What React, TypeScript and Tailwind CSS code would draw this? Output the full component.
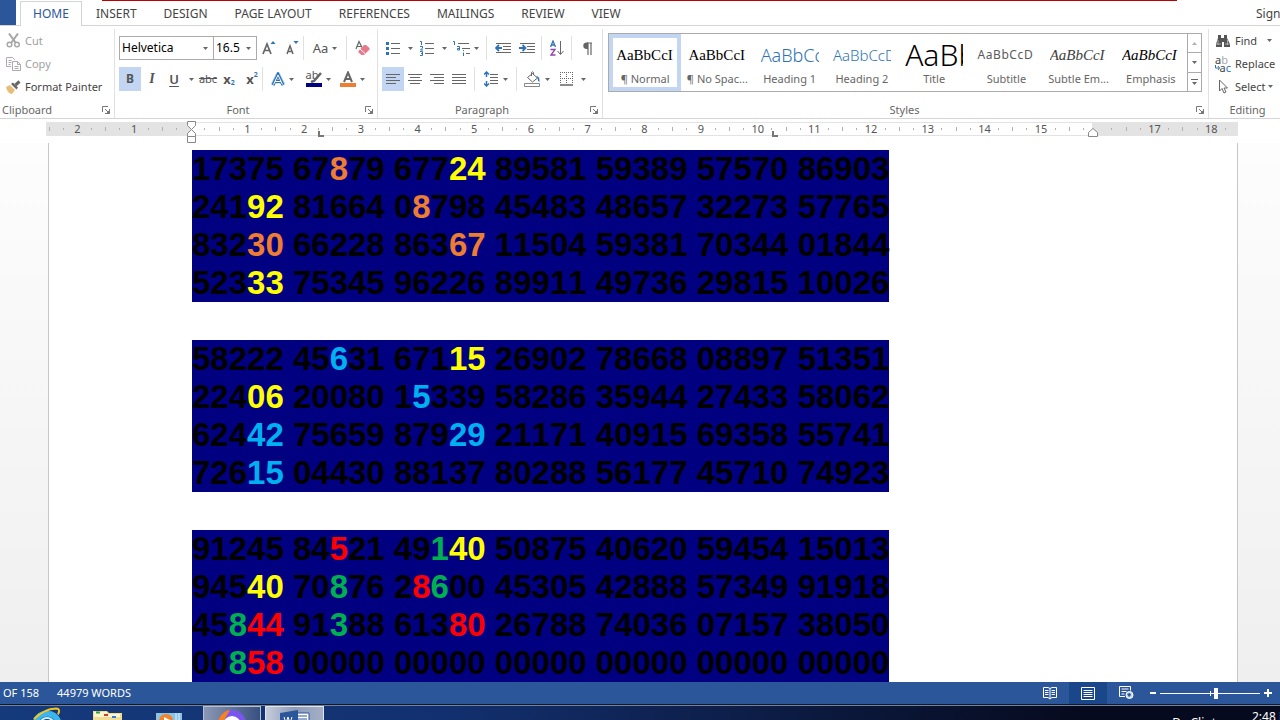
import type { ReactNode } from 'react';

const blocks = [
  [
    '17375 67[o8]79 677[y24] 89581 59389 57570 86903',
    '241[y92] 81664 0[o8]798 45483 48657 32273 57765',
    '832[o30] 66228 863[o67] 11504 59381 70344 01844',
    '523[y33] 75345 96226 89911 49736 29815 10026',
  ],
  [
    '58222 45[b6]31 671[y15] 26902 78668 08897 51351',
    '224[y06] 20080 1[b5]339 58286 35944 27433 58062',
    '624[b42] 75659 879[b29] 21171 40915 69358 55741',
    '726[b15] 04430 88137 80288 56177 45710 74923',
  ],
  [
    '91245 84[r5]21 49[g1][y40] 50875 40620 59454 15013',
    '945[y40] 70[g8]76 2[r8][g6]00 45305 42888 57349 91918',
    '45[g8][r44] 91[g3]88 613[r80] 26788 74036 07157 38050',
    '00[g8][r58] 00000 00000 00000 00000 00000 00000',
  ],
];

const inks: Record<string, string> = {
  o: 'text-[#ed7d31]',
  y: 'text-[#ffff00]',
  b: 'text-[#00b0f0]',
  g: 'text-[#00b050]',
  r: 'text-[#ff0000]',
};

const tabs = ['INSERT', 'DESIGN', 'PAGE LAYOUT', 'REFERENCES', 'MAILINGS', 'REVIEW', 'VIEW'];

const styleItems = [
  { name: '¶ Normal', sample: 'AaBbCcI', look: "font-['Liberation_Serif',serif] text-[15px] text-black", on: true },
  { name: '¶ No Spac...', sample: 'AaBbCcI', look: "font-['Liberation_Serif',serif] text-[15px] text-black" },
  { name: 'Heading 1', sample: 'AaBbCcD', look: 'font-light text-lg text-[#2e74b5]' },
  { name: 'Heading 2', sample: 'AaBbCcD', look: 'font-light text-[15px] text-[#2e74b5]' },
  { name: 'Title', sample: 'AaBb', look: 'font-light text-[30px] text-black' },
  { name: 'Subtitle', sample: 'AaBbCcD', look: 'text-[12px] tracking-wider text-[#5a5a5a]' },
  { name: 'Subtle Em...', sample: 'AaBbCcI', look: "font-['Liberation_Serif',serif] italic text-[15px] text-[#404040]" },
  { name: 'Emphasis', sample: 'AaBbCcI', look: "font-['Liberation_Serif',serif] italic text-[15px] text-black" },
];

function Caret({ className = '' }: { className?: string }) {
  return (
    <svg viewBox="0 0 5 3" className={`h-[3px] w-[5px] shrink-0 ${className}`} fill="#666">
      <path d="M0 0h5L2.5 3z" />
    </svg>
  );
}

function Sep() {
  return <span className="h-6 w-px shrink-0 bg-[#e1e1e1]" />;
}

function Tool({ label, width, on, children }: { label: string; width: string; on?: boolean; children: ReactNode }) {
  return (
    <button
      aria-label={label}
      className={`flex h-6 shrink-0 items-center justify-center gap-1 ${width} ${on ? 'bg-[#c2d5f2]' : ''}`}
    >
      {children}
    </button>
  );
}

function Glyph({ w = 16, h = 16, children }: { w?: number; h?: number; children: ReactNode }) {
  return (
    <svg width={w} height={h} viewBox={`0 0 ${w} ${h}`} className="shrink-0" fill="none" stroke="#666">
      {children}
    </svg>
  );
}

function Group({ name, className, launcher = true, children }: { name: string; className: string; launcher?: boolean; children: ReactNode }) {
  return (
    <section className={`relative flex h-[89px] flex-col ${className}`}>
      <div className="flex-1">{children}</div>
      <div className="flex h-4 items-center justify-center text-[#666]">{name}</div>
      {launcher && (
        <button aria-label={`${name} settings`} className="absolute right-1 bottom-1">
          <svg width="8" height="8" viewBox="0 0 8 8" fill="none" stroke="#777">
            <path d="M.5 6V.5H6M3 3l3 3M7.5 3v4.5H3" />
            <path d="M7.5 4.5v3h-3z" fill="#777" />
          </svg>
        </button>
      )}
    </section>
  );
}

function Lines({ rows }: { rows: [number, number][] }) {
  return (
    <Glyph w={14} h={12}>
      {rows.map(([x, w], i) => (
        <path key={i} d={`M${x} ${i * 3 + 1.5}h${w}`} />
      ))}
    </Glyph>
  );
}

function Clipboard() {
  return (
    <Group name="" className="w-[115px] border-r border-[#e1e1e1]">
      <div className="flex h-full flex-col text-[#444]">
        <button className="flex h-[23px] items-center gap-1 pl-1.5 text-[#a0a0a0]">
          <Glyph w={15} h={15}>
            <g stroke="#a6a6a6" strokeWidth="1.4">
              <path d="M3 .5l6.5 9M12 .5l-6.5 9" strokeWidth="2" />
              <circle cx="3.5" cy="11.5" r="2.3" />
              <circle cx="11" cy="11.5" r="2.3" />
            </g>
          </Glyph>
          Cut
        </button>
        <button className="flex h-[23px] items-center gap-1 pl-1.5 text-[#a0a0a0]">
          <Glyph w={15} h={14}>
            <g stroke="#b0a8b0">
              <path d="M5 9.5H.5v-9h6l2 2V3M2.500 3.500h3M2.500 5.500h3M2.500 7.500h2" />
              <path d="M6.500 4.500h5l3 3v6h-8zM11.500 4.500v3h3M8.500 9.500h4M8.500 11.500h4" fill="#fff" />
            </g>
          </Glyph>
          Copy
        </button>
        <button className="flex h-[23px] items-center gap-1 pl-1.5">
          <Glyph w={15} h={14}>
            <path d="M0 7l4-2 5 5-3 4c-3 0-5-3-6-7z" fill="#e8bd78" stroke="none" />
            <path d="M5 4l2-1.500 5 5L10.500 9.500z" fill="#666" stroke="none" />
            <path d="M9.500 5l4-3.500" stroke="#666" strokeWidth="3" />
          </Glyph>
          Format Painter
        </button>
      </div>
      <span className="absolute bottom-0 left-0.5 text-[#666]">Clipboard</span>
    </Group>
  );
}

function FontGroup() {
  return (
    <Group name="Font" className="w-[263px] border-r border-[#e1e1e1] pr-4">
      <div className="flex flex-col gap-[7px] pt-[7px] pl-1">
        <div className="flex h-6 items-center">
          <label className="relative flex items-center">
            <select aria-label="Font name" className="h-6 w-[95px] appearance-none border border-[#ababab] bg-white pl-0.5 text-[12px] text-black">
              <option>Helvetica</option>
            </select>
            <Caret className="absolute right-1.5" />
          </label>
          <label className="relative -ml-px flex items-center">
            <select aria-label="Font size" className="h-6 w-11 appearance-none border border-[#ababab] bg-white pl-0.5 text-[12px] text-black">
              <option>16.5</option>
            </select>
            <Caret className="absolute right-1.5" />
          </label>
          <Tool label="Grow font" width="w-6">
            <Glyph w={14} h={16}>
              <path d="M1 14L5 4l4 10M2.500 10.500h5" strokeWidth="1.700" />
              <path d="M8.500 4h5L11 1z" fill="#2e74b5" stroke="none" />
            </Glyph>
          </Tool>
          <Tool label="Shrink font" width="w-[22px]">
            <Glyph w={14} h={16}>
              <path d="M2 14l3-8 3 8M3 11.500h4" strokeWidth="1.500" />
              <path d="M8.500 1h5L11 4z" fill="#2e74b5" stroke="none" />
            </Glyph>
          </Tool>
          <Sep />
          <Tool label="Change case" width="w-[42px]">
            <span className="text-[13px] text-[#555]">Aa</span>
            <Caret />
          </Tool>
          <Sep />
          <Tool label="Clear formatting" width="w-[30px]">
            <Glyph w={16} h={16}>
              <path d="M2 9L5 1.500l3 6M3 6.500h4" strokeWidth="1.200" />
              <path d="M4.500 11l5.500-6h2l3.500 3v1.500L10 15H7.500l-3-2.500z" fill="#e8788c" stroke="none" />
              <path d="M6 9l5 4.500" stroke="#fff" />
            </Glyph>
          </Tool>
        </div>
        <div className="flex h-6 items-center text-[#555]">
          <Tool label="Bold" width="w-[22px]" on><b className="text-[12px]">B</b></Tool>
          <Tool label="Italic" width="w-[22px]"><i className="font-['Liberation_Serif',serif] text-sm font-bold">I</i></Tool>
          <Tool label="Underline" width="w-[37px]">
            <span className="pr-1.5 text-[13px] font-semibold underline underline-offset-2">U</span>
            <Caret />
          </Tool>
          <Tool label="Strikethrough" width="w-4"><s className="text-[11px]">abc</s></Tool>
          <Tool label="Subscript" width="w-[26px]">
            <b className="text-[13px]">x</b>
            <small className="-ml-1 pt-2 text-[7px] font-bold text-[#2e74b5]">2</small>
          </Tool>
          <Tool label="Superscript" width="w-5">
            <b className="text-[13px]">x</b>
            <small className="-ml-1 pb-2 text-[7px] font-bold text-[#2e74b5]">2</small>
          </Tool>
          <span className="w-[5px]" />
          <Sep />
          <Tool label="Text effects" width="w-[38px]">
            <Glyph w={14} h={15}>
              <path d="M1.500 13L7 2l5.500 11M4 9.500h6" stroke="#b5d3ee" strokeWidth="4" strokeLinejoin="round" />
              <path d="M2 13L7 2.500 12 13M4 9.500h6" stroke="#2e74b5" strokeWidth="3" />
              <path d="M2.500 12.500L7 3l4.500 9.500M4 9.500h6" stroke="#fff" />
            </Glyph>
            <Caret />
          </Tool>
          <Tool label="Highlight color" width="w-[34px]">
            <span className="relative flex h-4 w-4 flex-col justify-end">
              <span className="absolute -top-1 left-0 text-[11px] leading-4">ab</span>
              <svg width="16" height="16" viewBox="0 0 16 16" className="absolute inset-0">
                <path d="M15 2L8 10l-3 1" stroke="#666" strokeWidth="2.500" fill="none" />
              </svg>
              <span className="h-1 bg-[#000080]" />
            </span>
            <Caret />
          </Tool>
          <Tool label="Font color" width="w-[34px]">
            <Glyph w={16} h={16}>
              <path d="M4 11L8 1.500 12 11M5.500 8h5" strokeWidth="2" />
              <path d="M0 14h16" stroke="#ed7d31" strokeWidth="4" />
            </Glyph>
            <Caret />
          </Tool>
        </div>
      </div>
    </Group>
  );
}

function ParagraphGroup() {
  return (
    <Group name="Paragraph" className="w-[225px] border-r border-[#e1e1e1] pr-4">
      <div className="-mr-4 flex flex-col gap-[7px] pt-[7px] pl-1">
        <div className="flex h-6 items-center">
          <Tool label="Bullets" width="w-[34px]">
            <Glyph w={14} h={15}>
              <path d="M5 2.500h9M5 7.500h9M5 12.500h9" />
              <path d="M0 2.500h3M0 7.500h3M0 12.500h3" stroke="#2e74b5" strokeWidth="3" />
            </Glyph>
            <Caret className="ml-1" />
          </Tool>
          <Tool label="Numbering" width="w-[34px]">
            <Glyph w={14} h={15}>
              <path d="M5 2.500h9M5 7.500h9M5 12.500h9" />
              <path d="M0 .500h1.500V4M0 5.500h2.500v1.500L.500 9H3M0 10.500h2.500v4H0M1 12.500h1" stroke="#2e74b5" />
            </Glyph>
            <Caret className="ml-1" />
          </Tool>
          <Tool label="Multilevel list" width="w-[31px]">
            <Glyph w={17} h={15}>
              <path d="M5 2.500h11M9 7.500h8M13 12.500h4" />
              <path d="M0 .500h1.500V4M4 5.500h2.500V9H4.500V7.500h2M10.500 9v1M10.500 11.500V15" stroke="#2e74b5" />
            </Glyph>
            <Caret />
          </Tool>
          <span className="w-1.5" />
          <Sep />
          <Tool label="Decrease indent" width="w-8">
            <Glyph w={16} h={13}>
              <path d="M1 1.500h15M8 4.500h8M8 7.500h8M1 10.500h15" />
              <path d="M4 3L1 6l3 3M1 6h6" stroke="#2e74b5" strokeWidth="1.800" />
            </Glyph>
          </Tool>
          <Tool label="Increase indent" width="w-4">
            <Glyph w={16} h={13}>
              <path d="M1 1.500h15M8 4.500h8M8 7.500h8M1 10.500h15" />
              <path d="M3.500 3l3 3-3 3M0 6h6" stroke="#2e74b5" strokeWidth="1.800" />
            </Glyph>
          </Tool>
          <span className="w-2" />
          <Sep />
          <Tool label="Sort" width="w-[29px]">
            <Glyph w={14} h={16}>
              <path d="M.500 7L3 1l2.500 6M1.500 5h3" stroke="#2e74b5" strokeWidth="1.300" />
              <path d="M.500 9.500h4.500L1 15h4.500" stroke="#8e44ad" strokeWidth="1.300" />
              <path d="M10.500 1v13M7.500 11l3 3.500 3-3.500" />
            </Glyph>
          </Tool>
          <Sep />
          <Tool label="Show marks" width="w-[30px]">
            <Glyph w={11} h={13}>
              <path d="M5 1h5M6 1v12M9 1v12" strokeWidth="1.200" />
              <path d="M6 .500H4a3.300 3.300 0 000 6.500h2z" fill="#666" stroke="none" />
            </Glyph>
          </Tool>
        </div>
        <div className="flex h-6 items-center">
          <Tool label="Align left" width="w-[22px]" on><Lines rows={[[0, 14], [0, 10], [0, 14], [0, 10]]} /></Tool>
          <Tool label="Center" width="w-[22px]"><Lines rows={[[0, 14], [2, 10], [0, 14], [2, 10]]} /></Tool>
          <Tool label="Align right" width="w-[22px]"><Lines rows={[[0, 14], [4, 10], [0, 14], [4, 10]]} /></Tool>
          <Tool label="Justify" width="w-[22px]"><Lines rows={[[0, 14], [0, 14], [0, 14], [0, 14]]} /></Tool>
          <span className="w-1" />
          <Sep />
          <Tool label="Line spacing" width="w-[41px]">
            <Glyph w={15} h={16}>
              <path d="M6 3.500h8M6 6.500h8M6 9.500h8M6 12.500h8" />
              <path d="M2.500 1v5M2.500 10v5M0 3.500L2.500 1 5 3.500M0 12.500L2.500 15 5 12.500" stroke="#2e74b5" strokeWidth="1.500" />
            </Glyph>
            <Caret />
          </Tool>
          <Sep />
          <Tool label="Shading" width="w-10">
            <Glyph w={17} h={16}>
              <path d="M3.500 6.500l5-4 5 4.500-5 4zM7.500 5V1.500Q8 0 9.500 1.500V4" />
              <path d="M12 5q4 0 3.500 6-2-1-2-4z" fill="#2e74b5" stroke="none" />
              <path d="M.500 12.500h15v3H.500z" stroke="#888" />
            </Glyph>
            <Caret />
          </Tool>
          <Tool label="Borders" width="w-[31px]">
            <Glyph w={13} h={14}>
              <path d="M0 .500h13M0 6.500h13M.500 0v12M6.500 0v12M12.500 0v12" strokeDasharray="1 1" />
              <path d="M0 13h13" strokeWidth="1.500" />
            </Glyph>
            <Caret className="ml-1" />
          </Tool>
        </div>
      </div>
    </Group>
  );
}

function StylesGroup() {
  return (
    <Group name="Styles" className="min-w-0 flex-1 border-r border-[#e1e1e1] pr-[7px] pl-[5px]">
      <div className="-mr-px mt-1 flex h-[59px] overflow-hidden border border-[#ababab] bg-white">
        <div className="flex min-w-0 flex-1">
          {styleItems.map((s) => (
            <button
              key={s.name}
              className={`flex h-[57px] min-w-0 flex-1 flex-col items-center border-4 ${s.on ? 'border-[#c2d5f2]' : 'border-transparent'}`}
            >
              <span className={`flex h-[33px] w-[58px] items-center overflow-hidden whitespace-nowrap ${s.look}`}>{s.sample}</span>
              <span className="whitespace-nowrap text-[#666]">{s.name}</span>
            </button>
          ))}
        </div>
        <div className="flex w-[14px] flex-col divide-y divide-[#ababab] border-l border-[#ababab]">
          <button aria-label="Scroll up" className="flex flex-1 items-center justify-center"><Caret className="rotate-180 opacity-50" /></button>
          <button aria-label="Scroll down" className="flex flex-1 items-center justify-center"><Caret /></button>
          <button aria-label="More styles" className="flex flex-1 flex-col items-center justify-center gap-0.5">
            <span className="h-px w-[7px] bg-[#666]" />
            <Caret />
          </button>
        </div>
      </div>
    </Group>
  );
}

function EditingGroup() {
  return (
    <Group name="Editing" className="w-[71px] pl-1.5 text-[#444]" launcher={false}>
      <div className="flex flex-col">
        <button className="flex h-[23px] items-center gap-1">
          <Glyph w={16} h={14}>
            <path d="M3 1h3v3h3V1h3v3l3 6v3H9V8H7v5H1v-3l2-6z" fill="#555" stroke="none" />
            <path d="M3 6v5M12.500 6v5M1 10h5M10 10h5" stroke="#ccc" strokeWidth=".7" />
          </Glyph>
          Find
          <Caret className="ml-1.5" />
        </button>
        <button className="flex h-[23px] items-center gap-1">
          <span className="relative flex h-4 w-4 shrink-0 flex-col text-[11px] leading-[8px]">
            <span className="text-left">a<span className="text-[#aaa]">b</span></span>
            <span className="text-right">a<span className="text-[#2e74b5]">c</span></span>
            <svg width="5" height="5" viewBox="0 0 5 5" className="absolute bottom-0.5 left-0" fill="none" stroke="#2e74b5">
              <path d="M.500 0v3h4M3 1l1.500 2L3 5" />
            </svg>
          </span>
          Replace
        </button>
        <button className="flex h-[23px] items-center gap-1">
          <Glyph w={16} h={15}>
            <path d="M4.500 1v11l2.500-2.500L9 14l2-1-2-4h3.500z" />
          </Glyph>
          Select
          <Caret className="-ml-0.5" />
        </button>
      </div>
    </Group>
  );
}

// quarter-centimetre steps, left edge to right edge
const rulerSteps = Array.from({ length: 84 }, (_, i) => i - 10);

function Ruler() {
  return (
    <div className="h-6 shrink-0 bg-white pt-[3px] pr-[42px] pl-[46px]">
      <div className="relative flex h-[14px] border-y border-[#e3e3e3]">
        <div className="w-[145px] bg-[#e3e3e3]" />
        <div className="flex-1" />
        <div className="w-[146px] bg-[#e3e3e3]" />
        <div className="absolute inset-y-0 right-1.5 -left-1 flex text-[11px] leading-3 text-[#555]">
          {rulerSteps.map((q) => {
            const cm = q / 4;
            return (
              <span key={q} className="flex min-w-0 flex-1 items-center justify-center">
                {q % 4 === 0 ? (
                  cm !== 0 && cm !== 16 && <span>{Math.abs(cm)}</span>
                ) : (
                  <span className={`w-px bg-[#b0b0b0] ${q % 2 === 0 ? 'h-1' : 'h-0.5'}`} />
                )}
              </span>
            );
          })}
        </div>
        <svg width="9" height="22" viewBox="0 0 9 22" className="absolute -top-0.5 left-[141px]" fill="#fff" stroke="#888">
          <path d="M.500.500h8v4l-4 4-4-4zM4.500 8.500l4 4v3h-8v-3zM.500 15.500h8v6h-8z" />
        </svg>
        <svg width="10" height="9" viewBox="0 0 10 9" className="absolute top-[5px] right-[140px]" fill="#fff" stroke="#888">
          <path d="M5 .500l4.500 4v4h-9v-4z" />
        </svg>
        <svg width="6" height="6" viewBox="0 0 6 6" className="absolute top-2 left-[272px]" fill="none" stroke="#777" strokeWidth="2">
          <path d="M1 0v5h5" />
        </svg>
        <svg width="6" height="6" viewBox="0 0 6 6" className="absolute top-2 left-[726px]" fill="none" stroke="#777" strokeWidth="2">
          <path d="M1 0v5h5" />
        </svg>
      </div>
    </div>
  );
}

function NumberLine({ text }: { text: string }) {
  return (
    <p>
      {text.split(/(\[\w+\])/).map((part, i) =>
        part.startsWith('[') ? (
          <span key={i} className={inks[part[1]]}>{part.slice(2, -1)}</span>
        ) : (
          part
        )
      )}
    </p>
  );
}

function StatusBar() {
  return (
    <footer className="flex h-[22px] shrink-0 items-center bg-[#2b579a] pl-[3px] text-white">
      <span>OF 158</span>
      <span className="ml-[18px]">44979 WORDS</span>
      <div className="ml-auto flex h-full items-center">
        <button aria-label="Read mode" className="flex h-full w-[38px] items-center justify-center">
          <svg width="14" height="13" viewBox="0 0 14 13" fill="none" stroke="#fff">
            <path d="M.500.500H5l2 1 2-1h4.500v10H9l-2 1.500-2-1.500H.500zM7 1.500V12M2 3.500h3.500M2 5.500h3.500M2 7.500h3.500M8.500 3.500H12M8.500 5.500H12M8.500 7.500H12" />
          </svg>
        </button>
        <button aria-label="Print layout" className="flex h-full w-[38px] items-center justify-center bg-[#1a4789]">
          <svg width="14" height="13" viewBox="0 0 14 13" fill="none" stroke="#fff">
            <path d="M.500.500h13v12H.500zM2.500 3.500h9M2.500 5.500h9M2.500 7.500h9M2.500 9.500h9" />
          </svg>
        </button>
        <button aria-label="Web layout" className="flex h-full w-[38px] items-center justify-center">
          <svg width="15" height="14" viewBox="0 0 15 14" fill="none" stroke="#fff">
            <path d="M6 10.500H.500V.500h11v4M2.500 3h7M2.500 5.500h5M2.500 8h3" />
            <circle cx="10.500" cy="9" r="3.500" fill="#c4d4ea" />
            <path d="M8 8l3-1 1 2-2 2z" fill="#2b579a" stroke="none" />
          </svg>
        </button>
        <button aria-label="Zoom out" className="ml-[5px] flex h-full w-2.5 items-center"><span className="h-0.5 w-1.5 bg-white" /></button>
        <input
          type="range"
          aria-label="Zoom"
          min={0}
          max={100}
          defaultValue={56}
          className="h-[11px] w-[100px] appearance-none bg-[linear-gradient(#fff,#fff),linear-gradient(#fff,#fff)] bg-[length:100%_1px,1px_5px] bg-center bg-no-repeat [&::-webkit-slider-thumb]:h-[11px] [&::-webkit-slider-thumb]:w-1 [&::-webkit-slider-thumb]:appearance-none [&::-webkit-slider-thumb]:bg-white"
        />
        <button aria-label="Zoom in" className="flex h-full w-5 items-center pl-1">
          <svg width="8" height="8" viewBox="0 0 8 8" stroke="#fff" strokeWidth="2"><path d="M0 4h8M4 0v8" /></svg>
        </button>
      </div>
    </footer>
  );
}

function Taskbar() {
  return (
    <nav className="relative flex h-4 shrink-0 items-start overflow-hidden border-t border-[#10182c] bg-gradient-to-r from-[#153a7c] via-[#12306f] via-35% to-[#060a1e] to-85%">
      <span className="absolute inset-x-0 top-0 h-px bg-[#74819c]" />
      <button aria-label="Browser" className="ml-8 h-[15px] w-[30px]">
        <svg width="30" height="15" viewBox="0 0 30 15" fill="none">
          <path d="M4 16a12 12 0 0122 0" stroke="#3bb5ee" strokeWidth="6" />
          <path d="M9 16a7 6 0 0112 0" stroke="#c9f1ff" strokeWidth="2" />
          <path d="M2 14Q12 4 24 3.500q5 0 2 6" stroke="#f5c51c" strokeWidth="2" />
        </svg>
      </button>
      <button aria-label="Files" className="ml-[30px] h-[15px] w-8">
        <svg width="32" height="15" viewBox="0 0 32 15">
          <path d="M1 15V6h14l2 2h13v7z" fill="#f1dc94" />
          <path d="M2 7h13v2h13v3H2z" fill="#fff6cf" />
          <path d="M4 6.500h4v2H4z" fill="#2da23a" />
          <path d="M12 9h4v2h-4z" fill="#d13d2c" />
          <path d="M20 11h4v2h-4z" fill="#2f7de0" />
        </svg>
      </button>
      <button aria-label="Media" className="ml-8 h-[15px] w-7">
        <svg width="28" height="15" viewBox="0 0 28 15">
          <path d="M0 8h26v7H0z" fill="#8cc3e2" />
          <path d="M20 8v7M23 8v7" stroke="#dff3ff" />
          <circle cx="10" cy="16" r="7" fill="#f08427" />
          <path d="M8 12l6 3H8z" fill="#fff" />
        </svg>
      </button>
      <button aria-label="Chat" className="mt-px ml-[19px] flex h-[14px] w-[58px] justify-center border border-b-0 border-[#b7c0d3] bg-gradient-to-r from-[#8b98b5] to-[#38517f]">
        <svg width="30" height="14" viewBox="0 0 30 14">
          <circle cx="15" cy="17" r="14" fill="#7a55ee" />
          <path d="M1 17A14 14 0 0113 3l-4 7-4 7z" fill="#f58220" />
          <circle cx="15" cy="18" r="9" fill="#fff" />
        </svg>
      </button>
      <button aria-label="Word" className="mt-px ml-1 flex h-[14px] w-[59px] justify-center border border-b-0 border-[#dfe4ee] bg-gradient-to-r from-[#c5ccdb] via-[#8d9bb8] to-[#a4afc6]">
        <svg width="30" height="14" viewBox="0 0 30 14">
          <path d="M16 6h13v10H16z" fill="#fff" stroke="#2b579a" />
          <path d="M18 9h9M18 12h9" stroke="#2b579a" />
          <path d="M0 6l18-3v13H0z" fill="#2b579a" />
          <path d="M4 10l2 6 2-6 2 6 2-6" stroke="#fff" fill="none" />
        </svg>
      </button>
      <span className="mt-2.5 mr-9 ml-auto text-[12px] leading-4 text-white">Dr. Clint</span>
      <span className="mt-1 w-7 whitespace-nowrap text-[12px] leading-4 text-white">2:48 PM</span>
    </nav>
  );
}

export default function App() {
  return (
    <div className="flex h-screen flex-col overflow-hidden bg-white font-['Noto_Sans',sans-serif] text-[11px] leading-4 text-[#444]">
      <header className="relative flex h-[26px] shrink-0 items-stretch border-b border-[#d4d4d4] text-[12px]">
        <span className="absolute top-0 right-[103px] left-[102px] h-px bg-[#c00000]" />
        <button aria-label="File" className="w-4 bg-[#2b579a]" />
        <nav className="flex flex-1 items-stretch">
          <button className="mt-px -mb-px ml-1 w-[62px] border border-b-0 border-[#d4d4d4] bg-white text-[#2b579a]">HOME</button>
          <div className="ml-3.5 flex gap-[27px] pt-0.5">
            {tabs.map((t) => (
              <button key={t}>{t}</button>
            ))}
          </div>
        </nav>
        <a href="#" className="flex w-6 items-center pt-0.5 whitespace-nowrap">Sign in</a>
      </header>

      <div className="flex h-[93px] shrink-0 border-b border-[#d4d4d4] pt-[3px]">
        <Clipboard />
        <FontGroup />
        <ParagraphGroup />
        <StylesGroup />
        <EditingGroup />
      </div>

      <Ruler />

      <main className="min-h-0 flex-1 overflow-hidden bg-gradient-to-b from-[#fdfdfd] to-[#efefef] pr-[42px] pl-12">
        <article className="flex h-full flex-col gap-[38px] border-x border-[#c6c6c6] bg-white pt-[7px] pl-[143px]">
          {blocks.map((lines, i) => (
            <div
              key={i}
              className="w-fit shrink-0 bg-[#000080] font-['Liberation_Sans',Arial,sans-serif] text-[33px] leading-[38px] font-bold whitespace-nowrap text-black [font-kerning:none]"
            >
              {lines.map((line) => (
                <NumberLine key={line} text={line} />
              ))}
            </div>
          ))}
        </article>
      </main>

      <StatusBar />
      <Taskbar />
    </div>
  );
}
